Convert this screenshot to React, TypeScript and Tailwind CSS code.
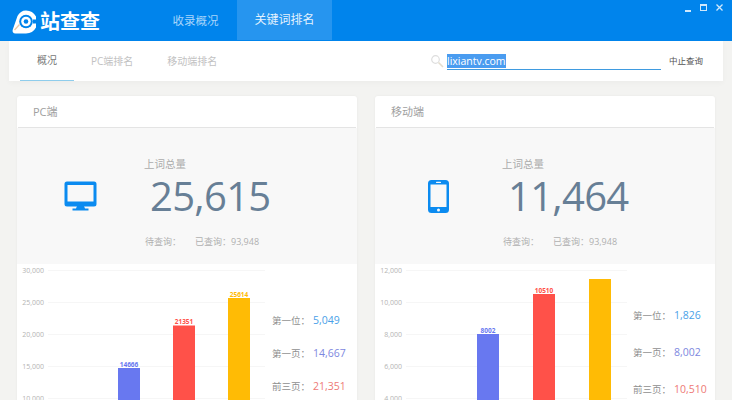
import React from 'react';

const FONT = "font-['Open_Sans','Noto_Sans_CJK_SC',sans-serif]";

function Logo() {
  return (
    <svg width="24" height="24" viewBox="0 0 24 24" className="shrink-0">
      <path d="M14 .5a11.500 11.500 0 0 1 10 6v11a11.500 11.500 0 0 1-10 6H3.500c-2.500 0-3.500-2-2.700-4L5.500 6C7.300 2.500 10.300.5 14 .5z" fill="#fff" />
      <path d="M24 9.500h-3v4h3z" fill="#0084ec" />
      <path d="M2.500 20L7.500 14.500" stroke="#e9c7a6" strokeWidth="1.300" />
      <circle cx="14" cy="11.500" r="6.800" fill="#0084ec" />
      <circle cx="14" cy="11.500" r="4.800" fill="#fff" />
      <circle cx="14" cy="11.500" r="2.300" fill="#0084ec" />
    </svg>
  );
}

function Monitor() {
  return (
    <svg width="33" height="30" viewBox="0 0 33 30">
      <path d="M3 .5h27a2.500 2.500 0 0 1 2.500 2.500v20a2.500 2.500 0 0 1-2.500 2.500H3A2.500 2.500 0 0 1 .5 23V3A2.500 2.500 0 0 1 3 .5zM3.500 4v16.500h26V4z" fill="#0b8bf0" fillRule="evenodd" />
      <path d="M13 25h7l1 2.500h3.500V29.500H8.500V27.500H12z" fill="#0b8bf0" />
    </svg>
  );
}

function Phone() {
  return (
    <svg width="21" height="33" viewBox="0 0 21 33">
      <path d="M3.500 0h14A3.500 3.500 0 0 1 21 3.500v26a3.500 3.500 0 0 1-3.500 3.500h-14A3.500 3.500 0 0 1 0 29.500v-26A3.500 3.500 0 0 1 3.500 0zM2.500 4.500v22.500h16V4.500z" fill="#0b8bf0" fillRule="evenodd" />
      <rect x="8" y="1.800" width="5" height="1.200" rx=".6" fill="#f8f8f8" />
      <circle cx="10.500" cy="30" r="1.500" fill="#f8f8f8" />
    </svg>
  );
}

interface Bar {
  x: number;
  top: number;
  color: string;
  label?: string;
}

function Chart({ ticks, gridLeft, gridRight, bars }: { ticks: string[]; gridLeft: number; gridRight: number; bars: Bar[] }) {
  return (
    <svg width="255" height="136" viewBox="0 0 255 136" className="shrink-0">
      {ticks.map((t, i) => (
        <g key={t}>
          <line x1={gridLeft} x2={gridRight} y1={6.500 + i * 32} y2={6.500 + i * 32} stroke="#f6f6f6" />
          <text x={gridLeft - 4} y={9 + i * 32} textAnchor="end" fontSize="7" fill="#b4b4b4">{t}</text>
        </g>
      ))}
      {bars.map((b) => (
        <g key={b.color}>
          <rect x={b.x} y={b.top} width="22" height={136 - b.top} fill={b.color} />
          {b.label && (
            <text x={b.x + 11} y={b.top - 1.500} textAnchor="middle" fontSize="6.500" fontWeight="700" fill={b.color}>{b.label}</text>
          )}
        </g>
      ))}
    </svg>
  );
}

interface Row {
  label: string;
  value: string;
  color: string;
}

function Legend({ rows, className }: { rows: Row[]; className: string }) {
  return (
    <div className={`flex flex-col ${className}`}>
      {rows.map((r) => (
        <div key={r.label} className="flex items-center h-[16px]">
          <span className="w-[41px] text-[9.500px] text-[#8f8f8f] whitespace-nowrap">{r.label}</span>
          <span className="text-[10.500px] whitespace-nowrap" style={{ color: r.color }}>{r.value}</span>
        </div>
      ))}
    </div>
  );
}

function Card({ title, icon, total, iconBox, chart }: { title: string; icon: React.ReactNode; total: string; iconBox: string; chart: React.ReactNode }) {
  return (
    <div className="w-[340px] h-[320px] shrink-0 bg-white rounded-[3px] shadow-[0_0_3px_rgba(0,0,0,0.05)]">
      <div className="h-[32px] mx-[1px] pl-[15px] pt-[2px] flex items-center border-b border-[#e4e4e4] text-[11px] text-[#a0a0a0]">{title}</div>
      <div className="h-[136px] bg-[#f8f8f8] flex">
        <div className={`flex items-center justify-center shrink-0 ${iconBox}`}>{icon}</div>
        <div className="flex flex-col">
          <div className="mt-[28px] h-[16px] leading-[16px] text-[10.500px] text-[#ababab]">上词总量</div>
          <div className="ml-[6px] h-[48px] leading-[48px] text-[40px] text-[#677f96] tracking-[-0.7px]">{total}</div>
          <div className="mt-[15px] ml-[1px] flex text-[9px] text-[#b0b0b0] leading-[14px]">
            <span className="w-[50px]">待查询：</span>
            <span>已查询：93,948</span>
          </div>
        </div>
      </div>
      {chart}
    </div>
  );
}

export default function App() {
  return (
    <div className={`w-[732px] h-[400px] overflow-hidden bg-[#f3f3f1] ${FONT}`}>
      <header className="h-[41px] bg-[#0084ec] flex relative">
        <div className="w-[156px] pl-[12px] flex items-center gap-[4px] pt-[2px]">
          <Logo />
          <span className="text-[20px] font-bold text-white leading-none">站查查</span>
        </div>
        <div className="w-[79px] flex items-center justify-center text-[11.500px] text-[#a8d5fb]">收录概况</div>
        <div className="ml-[2px] w-[95px] h-[40px] flex items-center justify-center text-[12px] text-[#e4f2fe] bg-[#2695ef]">关键词排名</div>
        <div className="absolute right-[9px] top-[4px] flex items-center gap-[9px] text-white">
          <span className="w-[6px] h-[1.500px] bg-[#cfe8fc] mt-[6px]" />
          <span className="w-[7px] h-[7px] border border-[#cfe8fc] border-t-2" />
          <svg width="7" height="7" viewBox="0 0 7 7"><path d="M.5.5l6 6M6.500.5l-6 6" stroke="#cfe8fc" strokeWidth="1.300" /></svg>
        </div>
      </header>

      <nav className="ml-[9px] w-[714px] h-[40px] bg-white flex items-stretch shadow-[0_2px_6px_rgba(0,0,0,0.03)]">
        <div className="ml-[11px] w-[54px] flex items-center justify-center text-[10px] text-[#777] border-b-[1.500px] border-[#8fcdec]">概况</div>
        <div className="ml-[17px] flex items-center text-[10px] text-[#c2c2c2]">PC端排名</div>
        <div className="ml-[34px] flex items-center text-[10px] text-[#c2c2c2]">移动端排名</div>
        <div className="ml-auto mr-[20px] flex items-center">
          <svg width="14" height="14" viewBox="0 0 14 14" className="mr-[3px]">
            <circle cx="5.500" cy="5.500" r="3.800" fill="none" stroke="#dedede" strokeWidth="1.200" />
            <path d="M8.500 8.500L13 13" stroke="#e4ddcd" strokeWidth="1.600" />
          </svg>
          <div className="w-[214px] h-[16px] mt-[1px] border-b-[1.500px] border-[#3f9be0] flex items-start">
            <span className="bg-[#4a9cf0] text-white text-[10.500px] leading-[14px]">lixiantv.com</span>
          </div>
          <span className="ml-[8px] text-[8.500px] text-[#555] whitespace-nowrap">中止查询</span>
        </div>
      </nav>

      <main className="mt-[15px] ml-[17px] flex gap-[18px]">
        <Card
          title="PC端"
          total="25,615"
          iconBox="w-[127px]"
          icon={<Monitor />}
          chart={
            <div className="flex relative">
              <Chart
                ticks={['30,000', '25,000', '20,000', '15,000', '10,000']}
                gridLeft={31}
                gridRight={248}
                bars={[
                  { x: 101, top: 104, color: '#6878f0', label: '14666' },
                  { x: 156, top: 61.500, color: '#ff5149', label: '21351' },
                  { x: 211, top: 34, color: '#ffbb05', label: '25614' },
                ]}
              />
              <Legend
                className="mt-[49px] gap-[17px]"
                rows={[
                  { label: '第一位：', value: '5,049', color: '#4a9fe8' },
                  { label: '第一页：', value: '14,667', color: '#7d88e0' },
                  { label: '前三页：', value: '21,351', color: '#ee7a76' },
                ]}
              />
            </div>
          }
        />
        <Card
          title="移动端"
          total="11,464"
          iconBox="w-[127px]"
          icon={<Phone />}
          chart={
            <div className="flex relative">
              <Chart
                ticks={['12,000', '10,000', '8,000', '6,000', '4,000']}
                gridLeft={31}
                gridRight={252}
                bars={[
                  { x: 102, top: 70, color: '#6878f0', label: '8002' },
                  { x: 158, top: 30, color: '#ff5149', label: '10510' },
                  { x: 214, top: 15, color: '#ffbb05' },
                ]}
              />
              <Legend
                className="mt-[44px] ml-[3px] gap-[21px]"
                rows={[
                  { label: '第一位：', value: '1,826', color: '#4a9fe8' },
                  { label: '第一页：', value: '8,002', color: '#7d88e0' },
                  { label: '前三页：', value: '10,510', color: '#ee7a76' },
                ]}
              />
            </div>
          }
        />
      </main>
    </div>
  );
}
